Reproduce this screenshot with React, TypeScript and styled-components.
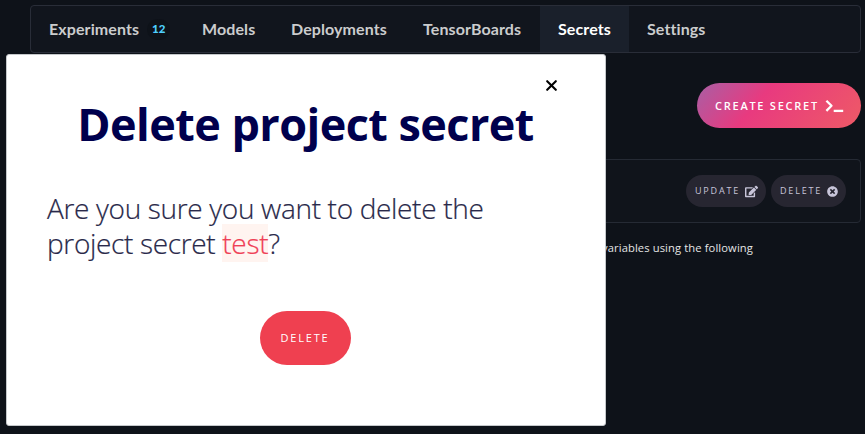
import React from "react";
import styled, { createGlobalStyle } from "styled-components";
import { FaEdit, FaTimesCircle } from "react-icons/fa";

const GlobalStyle = createGlobalStyle`
  * { box-sizing: border-box; }
  body { margin: 0; background: #0e1219; overflow: hidden; }
`;

const Page = styled.div`
  position: relative;
  width: 865px;
  height: 434px;
  padding: 5px 4px 0 30px;
  background: #0e1219;
  font-family: "Open Sans", sans-serif;
  overflow: hidden;
`;

const Tabs = styled.nav`
  display: flex;
  height: 48px;
  border: 1px solid #292d38;
  border-radius: 4px;
  background: #11151d;
`;

const Tab = styled.a<{ $active?: boolean; $width: number }>`
  display: flex;
  align-items: center;
  flex: none;
  width: ${(p) => p.$width}px;
  padding: 0 0 0 18px;
  font: 700 16px/24px Lato, sans-serif;
  letter-spacing: 0.1px;
  font-variant-ligatures: none;
  color: ${(p) => (p.$active ? "#fff" : "#cbcccd")};
  background: ${(p) => (p.$active ? "#1a202b" : "transparent")};
`;

const Count = styled.span`
  display: flex;
  align-items: center;
  justify-content: center;
  width: 23px;
  height: 21px;
  margin-left: 8px;
  border-radius: 11px;
  background: #0e1219;
  color: #4fd0ff;
  font: 900 11.5px/20px Lato, sans-serif;
  letter-spacing: 0;
`;

const Actions = styled.div`
  display: flex;
  justify-content: flex-end;
  margin-top: 30px;
`;

const CreateButton = styled.button`
  display: flex;
  align-items: center;
  width: 164px;
  height: 45px;
  padding: 0 0 0 18px;
  border: 0;
  border-radius: 23px;
  background: linear-gradient(130deg, #a85fa5 0%, #e83a7f 38%, #ee5a66 100%);
  color: #fff;
  font: 600 11px/16px "Open Sans", sans-serif;
  letter-spacing: 1.75px;
  white-space: nowrap;

  svg { margin-left: 6px; flex: none; }
`;

const SecretRow = styled.section`
  display: flex;
  align-items: center;
  justify-content: flex-end;
  gap: 5px;
  height: 64px;
  margin-top: 31px;
  padding-right: 14px;
  border: 1px solid #252a34;
  border-radius: 4px;
  background: #10141b;
`;

const RowButton = styled.button<{ $width: number }>`
  display: flex;
  align-items: center;
  justify-content: space-between;
  width: ${(p) => p.$width}px;
  height: 32px;
  padding: 0 8px 0 9px;
  border: 0;
  border-radius: 16px;
  background: #272631;
  color: #c8c5d9;
  font: 500 9px/14px "Open Sans", sans-serif;
  letter-spacing: 1.8px;
  white-space: nowrap;

  svg { flex: none; }
`;

const Hint = styled.p`
  margin: 17px 108px 0 0;
  text-align: right;
  font-size: 11.2px;
  font-weight: 500;
  line-height: 16px;
  letter-spacing: 0.11px;
  color: #e4e5e5;
`;

const Modal = styled.div`
  position: absolute;
  left: 6px;
  top: 54px;
  display: flex;
  flex-direction: column;
  width: 600px;
  height: 372px;
  border: 1px solid #c5c8cb;
  border-radius: 3px;
  background: #fff;
`;

const Close = styled.button`
  display: flex;
  align-self: flex-end;
  margin: 25px 48px 0 0;
  padding: 0;
  border: 0;
  background: none;
  color: #000;
`;

const Title = styled.h1`
  margin: 2px 0 0;
  height: 62px;
  padding-right: 1px;
  text-align: center;
  font: 700 45px/62px "Open Sans", sans-serif;
  letter-spacing: -0.55px;
  color: #00004d;
  white-space: nowrap;
`;

const Message = styled.p`
  margin: 36px 0 0 40px;
  width: 470px;
  font: 300 28px/35px "Open Sans", sans-serif;
  letter-spacing: -0.33px;
  color: #29294a;
  -webkit-text-stroke: 0.2px currentColor;
`;

const SecretName = styled.span`
  background: #fff4f0;
  color: #ef4056;
`;

const ConfirmButton = styled.button`
  align-self: center;
  width: 91px;
  height: 54px;
  margin-top: 50px;
  margin-right: 2px;
  padding: 0;
  border: 0;
  border-radius: 27px;
  background: #ef4050;
  color: #fff;
  font: 400 11px/16px "Open Sans", sans-serif;
  letter-spacing: 1.8px;
`;

const TerminalIcon = () => (
  <svg width="19" height="14" viewBox="0 0 19 14" fill="none" stroke="currentColor" strokeWidth="2.3">
    <path d="M1.4 1.7 6.5 6.8 1.4 11.9" strokeLinejoin="round" />
    <path d="M8.7 11.9H18.2" />
  </svg>
);

const CloseIcon = () => (
  <svg width="11" height="11" viewBox="0 0 11 11" fill="none" stroke="currentColor" strokeWidth="2.1" strokeLinecap="round">
    <path d="M1.2 1.2 9.8 9.8M9.8 1.2 1.2 9.8" />
  </svg>
);

export default function App() {
  return (
    <Page>
      <GlobalStyle />
      <Tabs>
        <Tab $width={153}>Experiments<Count>12</Count></Tab>
        <Tab $width={89}>Models</Tab>
        <Tab $width={132}>Deployments</Tab>
        <Tab $width={135}>TensorBoards</Tab>
        <Tab $width={89} $active>Secrets</Tab>
        <Tab $width={96}>Settings</Tab>
      </Tabs>
      <Actions>
        <CreateButton>CREATE SECRET<TerminalIcon /></CreateButton>
      </Actions>
      <SecretRow>
        <RowButton $width={80}>UPDATE<FaEdit size={13} /></RowButton>
        <RowButton $width={75}>DELETE<FaTimesCircle size={11} /></RowButton>
      </SecretRow>
      <Hint>variables using the following</Hint>
      <Modal role="dialog">
        <Close aria-label="Close"><CloseIcon /></Close>
        <Title>Delete project secret</Title>
        <Message>
          Are you sure you want to delete the project secret <SecretName>test</SecretName>?
        </Message>
        <ConfirmButton>DELETE</ConfirmButton>
      </Modal>
    </Page>
  );
}
